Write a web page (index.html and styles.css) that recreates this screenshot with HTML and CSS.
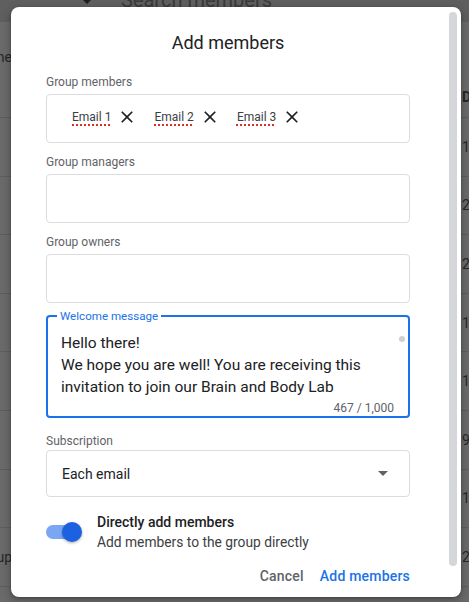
FILE: index.html
```html
<!DOCTYPE html>
<html>
<head>
<meta charset="utf-8">
<link rel="stylesheet" href="styles.css">
</head>
<body>
<div class="page">
  <div class="topbar">
    <svg class="tb-caret" viewBox="0 0 8 4"><path d="M0 0h8L4 4z"/></svg>
    <span class="tb-search">Search members</span>
  </div>
  <div class="thead">
    <div class="lcell lhead"><span>Name</span></div>
    <div class="rcell rhead"><span>Date</span></div>
  </div>
  <div class="row"><div class="lcell"></div><div class="rcell"><span>14</span></div></div>
  <div class="row"><div class="lcell"></div><div class="rcell"><span>21</span></div></div>
  <div class="row"><div class="lcell"></div><div class="rcell"><span>25</span></div></div>
  <div class="row"><div class="lcell"></div><div class="rcell"><span>10</span></div></div>
  <div class="row"><div class="lcell"></div><div class="rcell"><span>12</span></div></div>
  <div class="row"><div class="lcell"></div><div class="rcell"><span>9,2</span></div></div>
  <div class="row"><div class="lcell"></div><div class="rcell"><span>16</span></div></div>
  <div class="row"><div class="lcell"><span>Group</span></div><div class="rcell"><span>20</span></div></div>
</div>

<div class="dialog">
  <div class="dialog-body">
    <h1 class="title">Add members</h1>

    <div class="group first">
      <div class="label">Group members</div>
      <div class="field chips">
        <span class="chip"><span class="chip-text">Email 1</span><svg class="chip-x" viewBox="0 0 24 24"><path d="M19 6.41L17.59 5 12 10.59 6.41 5 5 6.41 10.59 12 5 17.59 6.41 19 12 13.41 17.59 19 19 17.59 13.41 12z"/></svg></span>
        <span class="chip"><span class="chip-text">Email 2</span><svg class="chip-x" viewBox="0 0 24 24"><path d="M19 6.41L17.59 5 12 10.59 6.41 5 5 6.41 10.59 12 5 17.59 6.41 19 12 13.41 17.59 19 19 17.59 13.41 12z"/></svg></span>
        <span class="chip"><span class="chip-text">Email 3</span><svg class="chip-x" viewBox="0 0 24 24"><path d="M19 6.41L17.59 5 12 10.59 6.41 5 5 6.41 10.59 12 5 17.59 6.41 19 12 13.41 17.59 19 19 17.59 13.41 12z"/></svg></span>
      </div>
    </div>

    <div class="group">
      <div class="label">Group managers</div>
      <div class="field"></div>
    </div>

    <div class="group">
      <div class="label">Group owners</div>
      <div class="field"></div>
    </div>

    <fieldset class="message">
      <legend>Welcome message</legend>
      <div class="msg-text">
        <div>Hello there!</div>
        <div>We hope you are well! You are receiving this</div>
        <div>invitation to join our Brain and Body Lab</div>
        <span class="msg-scroll"></span>
      </div>
      <div class="counter">467 / 1,000</div>
    </fieldset>

    <div class="group sub">
      <div class="label">Subscription</div>
      <div class="select">
        <span>Each email</span>
        <svg class="select-caret" viewBox="0 0 10 5"><path d="M0 0h10L5 5z"/></svg>
      </div>
    </div>

    <div class="toggle-row">
      <div class="switch"><span class="track"></span><span class="thumb"></span></div>
      <div class="toggle-text">
        <div class="t-title">Directly add members</div>
        <div class="t-sub">Add members to the group directly</div>
      </div>
    </div>

    <div class="actions">
      <button class="btn cancel">Cancel</button>
      <button class="btn primary">Add members</button>
    </div>
  </div>
  <div class="scrollbar"></div>
</div>
</body>
</html>
```

FILE: styles.css
```css
* { box-sizing: border-box; }
html, body { margin: 0; padding: 0; }
body {
  width: 469px;
  height: 602px;
  overflow: hidden;
  position: relative;
  background: #6b6b6b;
  font-family: Roboto, "Liberation Sans", Arial, sans-serif;
}

/* backdrop page (dimmed) */
.topbar {
  height: 22px;
  background: #5f5f5f;
  display: flex;
  align-items: flex-start;
  overflow: hidden;
  padding-left: 83px;
}
.tb-caret { width: 8px; height: 4px; fill: #1e1e1e; flex: none; }
.tb-search {
  margin-left: 30px;
  margin-top: -12px;
  font-size: 20px;
  line-height: 24px;
  color: #3a3a3a;
  white-space: nowrap;
}
.thead, .row {
  display: flex;
  justify-content: space-between;
  border-bottom: 1px solid #5e5e5e;
}
.thead { height: 96px; }
.row { height: 58.6px; align-items: center; }
.lcell {
  width: 12px;
  display: flex;
  justify-content: flex-end;
  white-space: nowrap;
  font-size: 14px;
  line-height: 20px;
  color: #262626;
}
.rcell {
  width: 7px;
  white-space: nowrap;
  font-size: 14px;
  line-height: 20px;
  color: #262626;
}
.lhead { align-self: flex-start; margin-top: 25px; }
.rhead { align-self: flex-end; margin-bottom: 10px; font-weight: 700; }

/* dialog */
.dialog {
  position: absolute;
  left: 11px;
  top: 7px;
  width: 450px;
  height: 590px;
  background: #fff;
  border-radius: 8px;
  box-shadow: 0 1px 3px rgba(0,0,0,0.3), 0 4px 8px 3px rgba(0,0,0,0.15);
  overflow: hidden;
}
.dialog-body {
  padding: 24px 51px 0 35px;
}
.title {
  margin: 0;
  text-align: center;
  font-size: 18px;
  line-height: 24px;
  font-weight: 400;
  color: #202124;
}
.group { margin-top: 11px; }
.group.first { margin-top: 19px; }
.group.sub { margin-top: 15px; }
.label {
  font-size: 12px;
  line-height: 16px;
  color: #5f6368;
}
.field {
  margin-top: 4px;
  height: 49px;
  border: 1px solid #dadce0;
  border-radius: 4px;
}
.chips {
  display: flex;
  align-items: center;
  padding: 0 0 3px 25px;
}
.chip {
  display: flex;
  align-items: center;
  margin-right: 17px;
}
.chip-text {
  font-size: 12px;
  line-height: 16px;
  color: #3c4043;
  text-decoration-line: underline;
  text-decoration-style: dotted;
  text-decoration-color: #d93025;
  text-decoration-thickness: 2px;
  text-underline-offset: 3px;
}
.chip-x {
  width: 20px;
  height: 20px;
  margin-left: 6px;
  fill: #202124;
}

/* welcome message */
.message {
  margin: 6px 0 0;
  padding: 0 9px 1px;
  min-width: 0;
  border: 2px solid #1a73e8;
  border-radius: 4px;
}
.message legend {
  padding: 0 3px;
  font-size: 11.6px;
  line-height: 14px;
  color: #1a73e8;
}
.msg-text {
  position: relative;
  margin: 9px 0 0 4px;
  font-size: 15.5px;
  line-height: 22px;
  color: #202124;
}
.msg-scroll {
  position: absolute;
  left: 338px;
  top: 4px;
  width: 6px;
  height: 6px;
  border-radius: 50%;
  background: #cfd0d2;
}
.counter {
  margin: 3px 5px 0 0;
  text-align: right;
  font-size: 12px;
  line-height: 14px;
  color: #5f6368;
}

/* select */
.select {
  margin-top: 1px;
  height: 47px;
  border: 1px solid #dadce0;
  border-radius: 4px;
  display: flex;
  align-items: center;
  justify-content: space-between;
  padding: 0 21px 0 15px;
  font-size: 14px;
  color: #202124;
}
.select-caret { width: 10px; height: 5px; fill: #5f6368; }

/* toggle */
.toggle-row {
  margin-top: 15px;
  display: flex;
  align-items: center;
}
.switch {
  position: relative;
  width: 36px;
  height: 20px;
  margin-right: 15px;
  flex: none;
}
.track {
  position: absolute;
  left: 0;
  top: 3px;
  width: 34px;
  height: 14px;
  border-radius: 7px;
  background: #7aa7f4;
}
.thumb {
  position: absolute;
  left: 16px;
  top: 0;
  width: 20px;
  height: 20px;
  border-radius: 50%;
  background: #1a62e0;
  box-shadow: 0 1px 3px rgba(0,0,0,0.35);
}
.t-title {
  font-size: 14px;
  line-height: 20px;
  font-weight: 500;
  color: #202124;
}
.t-sub {
  font-size: 13.8px;
  line-height: 20px;
  color: #3c4043;
}

/* actions */
.actions {
  margin-top: 14px;
  display: flex;
  justify-content: flex-end;
  gap: 16px;
}
.btn {
  border: 0;
  background: none;
  padding: 0;
  font-family: inherit;
  font-size: 14px;
  line-height: 20px;
  font-weight: 500;
  letter-spacing: 0.2px;
}
.cancel { color: #5f6368; }
.primary { color: #1a73e8; }

.scrollbar {
  position: absolute;
  left: 438px;
  top: 5px;
  width: 8px;
  height: 554px;
  border-radius: 4px;
  background: #d4d6da;
}
```
